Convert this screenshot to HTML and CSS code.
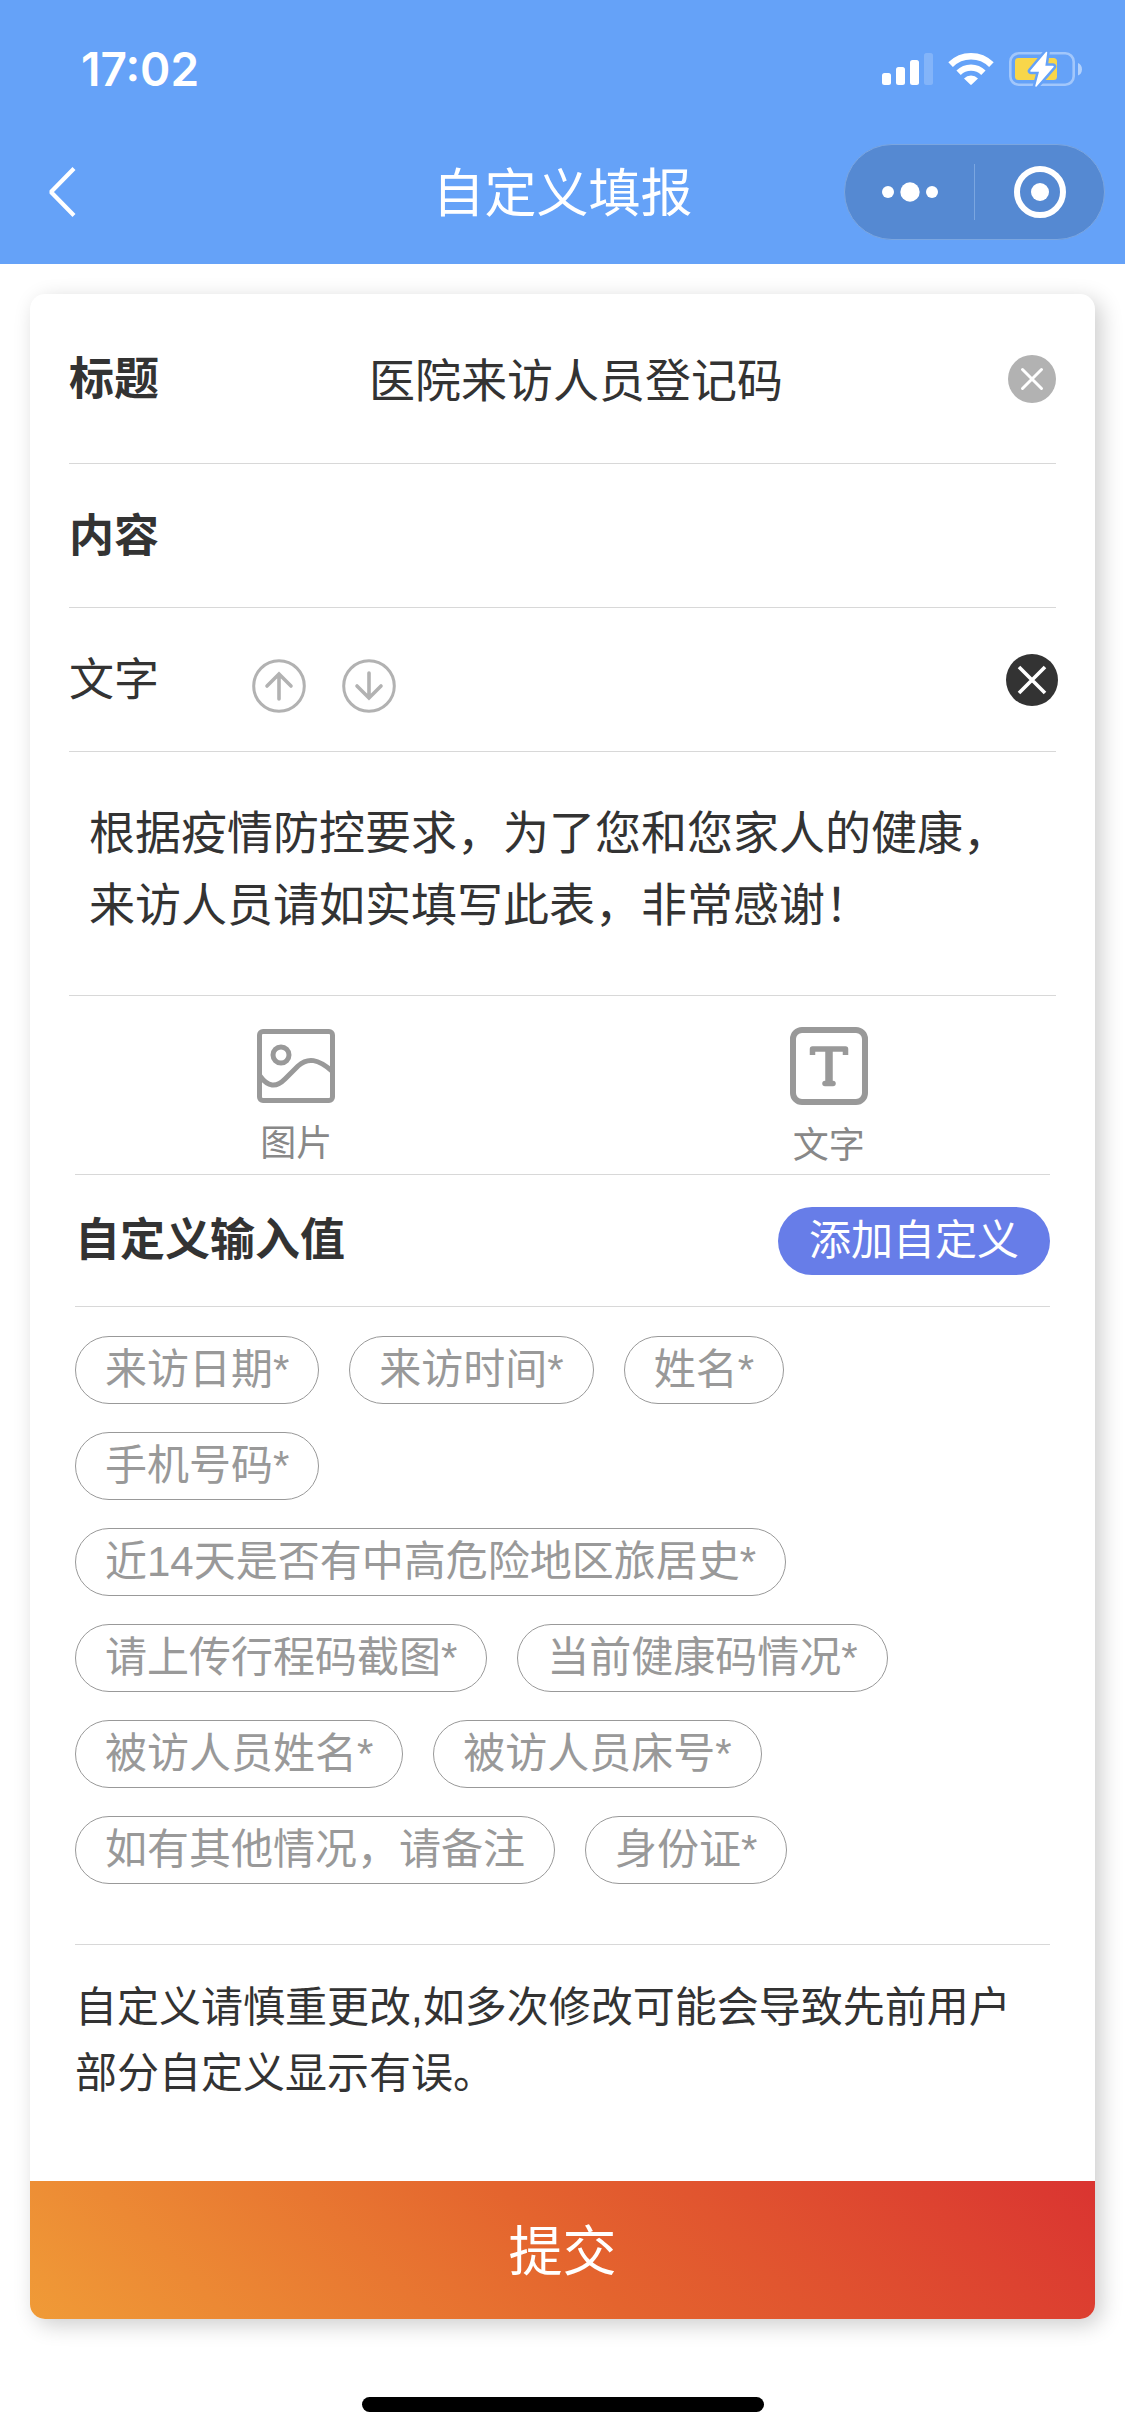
FILE: index.html
```html
<!DOCTYPE html>
<html lang="zh-CN">
<head>
<meta charset="utf-8">
<meta name="viewport" content="width=device-width, initial-scale=1">
<title>自定义填报</title>
<link rel="stylesheet" href="styles.css">
</head>
<body>
<header class="header">
  <div class="status">
    <span class="time">17:02</span>
    <div class="status-icons">
      <svg width="51" height="34" viewBox="0 0 51 34" fill="#fff" aria-hidden="true">
        <rect x="0" y="21" width="9" height="12" rx="2.5"/>
        <rect x="14" y="15" width="9" height="18" rx="2.5"/>
        <rect x="28" y="8" width="9" height="25" rx="2.5"/>
        <rect x="42" y="1" width="9" height="32" rx="2.5" opacity=".2"/>
      </svg>
      <svg width="46" height="34" viewBox="0 0 46 34" aria-hidden="true">
        <path d="M2.6 12.6a29 29 0 0 1 40.8 0" fill="none" stroke="#fff" stroke-width="6.5"/>
        <path d="M10.6 20.7a17.6 17.6 0 0 1 24.8 0" fill="none" stroke="#fff" stroke-width="6.2"/>
        <path d="M16 26.4a10 10 0 0 1 14 0l-6.3 6.2q-.7.7-1.4 0z" fill="#fff"/>
      </svg>
      <svg width="73" height="36" viewBox="0 0 73 36" aria-hidden="true">
        <rect x="1.3" y="2.3" width="63.4" height="31.4" rx="8.5" fill="none" stroke="#fff" stroke-opacity=".4" stroke-width="2.6"/>
        <path d="M69 12c5.3 1.5 5.3 11 0 12.5z" fill="#fff" opacity=".5"/>
        <rect x="6" y="7" width="42" height="22" rx="3.5" fill="#f8d64a"/>
        <path d="M37.5 1.5 22 20h9l-4 15L44 15.500h-8.500z" fill="#fff" stroke="#65a2f8" stroke-width="6.5" stroke-linejoin="round"/>
        <path d="M37.5 1.5 22 20h9l-4 15L44 15.500h-8.500z" fill="#fff" stroke="#fff" stroke-width="1.5" stroke-linejoin="round"/>
      </svg>
    </div>
  </div>
  <nav class="nav">
    <button class="back" type="button" aria-label="返回">
      <svg width="29" height="50" viewBox="0 0 29 50" fill="none" stroke="#fff" stroke-width="4.2" stroke-linejoin="bevel"><path d="M26 1.5 3 25l23 23.5"/></svg>
    </button>
    <h1 class="title">自定义填报</h1>
    <div class="capsule">
      <button class="capsule-btn" type="button" aria-label="更多">
        <svg width="56" height="20" viewBox="0 0 56 20" fill="#fff"><circle cx="6" cy="10" r="6"/><circle cx="28" cy="10" r="9.7"/><circle cx="50" cy="10" r="6"/></svg>
      </button>
      <button class="capsule-btn" type="button" aria-label="关闭">
        <svg width="52" height="52" viewBox="0 0 52 52"><circle cx="26" cy="26" r="23" fill="none" stroke="#fff" stroke-width="6"/><circle cx="26" cy="26" r="9" fill="#fff"/></svg>
      </button>
    </div>
  </nav>
</header>

<main class="page">
  <form class="card">
    <div class="fields">
      <div class="row row-title">
        <label class="label strong" for="form-title">标题</label>
        <input class="title-input" id="form-title" type="text" value="医院来访人员登记码">
        <button class="round-btn" type="button" aria-label="清空标题">
          <svg width="48" height="48" viewBox="0 0 48 48"><circle cx="24" cy="24" r="24" fill="#b2b2b2"/><path d="m14.500 14.500 19 19m0-19-19 19" stroke="#fff" stroke-width="3" stroke-linecap="round"/></svg>
        </button>
      </div>
      <div class="row">
        <h2 class="label strong">内容</h2>
      </div>
      <div class="row">
        <label class="label" for="form-text">文字</label>
        <div class="movers">
          <button class="move-btn" type="button" aria-label="上移">
            <svg width="54" height="54" viewBox="0 0 54 54" fill="none" stroke="#b2b2b2" stroke-width="3"><circle cx="27" cy="27" r="25.3"/><path d="M27 40V15M15 27l12-12 12 12" stroke-width="3.6" stroke-linecap="round"/></svg>
          </button>
          <button class="move-btn" type="button" aria-label="下移">
            <svg width="54" height="54" viewBox="0 0 54 54" fill="none" stroke="#b2b2b2" stroke-width="3"><circle cx="27" cy="27" r="25.3"/><path d="M27 14v25M15 27l12 12 12-12" stroke-width="3.6" stroke-linecap="round"/></svg>
          </button>
        </div>
        <button class="round-btn" type="button" aria-label="删除文字">
          <svg width="52" height="52" viewBox="0 0 52 52"><circle cx="26" cy="26" r="26" fill="#333"/><path d="m13 13 26 26m0-26L13 39" stroke="#fff" stroke-width="3.6"/></svg>
        </button>
      </div>
      <div class="text-block">
        <textarea class="text-area" id="form-text" rows="2">根据疫情防控要求，为了您和您家人的健康，来访人员请如实填写此表，非常感谢！</textarea>
      </div>
    </div>

    <div class="tools">
      <button class="tool" type="button">
        <svg width="78" height="74" viewBox="0 0 78 74" fill="none" stroke="#999" stroke-width="5"><rect x="2.5" y="2.5" width="73" height="69" rx="3.5"/><circle cx="24" cy="26" r="8"/><path d="M3 47c8 11 16 12 25 3l13-13c10-9 20-7 34 5"/></svg>
        <span>图片</span>
      </button>
      <button class="tool" type="button">
        <svg width="78" height="78" viewBox="0 0 78 78" fill="none" stroke="#999"><rect x="3" y="3" width="72" height="72" rx="9" stroke-width="6"/><path d="M22.500 28v-6h33v6" stroke-width="5.5" stroke-linejoin="round"/><path d="M39 22v34" stroke-width="7.5"/><path d="M35 56.500h8" stroke-width="5.5" stroke-linecap="round"/></svg>
        <span>文字</span>
      </button>
    </div>

    <section class="custom">
      <div class="custom-head">
        <h2 class="label strong">自定义输入值</h2>
        <button class="add-btn" type="button">添加自定义</button>
      </div>
      <div class="chips">
        <button class="chip" type="button">来访日期*</button>
        <button class="chip" type="button">来访时间*</button>
        <button class="chip" type="button">姓名*</button>
        <button class="chip" type="button">手机号码*</button>
        <button class="chip" type="button">近14天是否有中高危险地区旅居史*</button>
        <button class="chip" type="button">请上传行程码截图*</button>
        <button class="chip" type="button">当前健康码情况*</button>
        <button class="chip" type="button">被访人员姓名*</button>
        <button class="chip" type="button">被访人员床号*</button>
        <button class="chip" type="button">如有其他情况，请备注</button>
        <button class="chip" type="button">身份证*</button>
      </div>
      <p class="note">自定义请慎重更改,如多次修改可能会导致先前用户部分自定义显示有误。</p>
    </section>

    <button class="submit" type="submit">提交</button>
  </form>
</main>
<footer class="home"><div class="home-bar"></div></footer>
</body>
</html>
```

FILE: styles.css
```css
*, *::before, *::after { box-sizing: border-box; }

body {
  margin: 0;
  background: #fff;
  color: #333;
  font-family: "Liberation Sans", "Noto Sans CJK SC", sans-serif;
  font-size: 45px;
  line-height: 66px;
}

button, input, textarea {
  margin: 0;
  padding: 0;
  border: 0;
  background: none;
  color: inherit;
  font: inherit;
}

h1, h2, p { margin: 0; }
svg { display: block; flex: none; }

.header { background: #65a2f8; color: #fff; }

.status {
  display: flex;
  align-items: center;
  justify-content: space-between;
  height: 120px;
  padding: 18px 43px 0 81px;
}
.time { font-family: Inter, sans-serif; font-size: 46px; font-weight: 600; }
.status-icons { display: flex; align-items: center; gap: 15px; }

.nav {
  display: grid;
  grid-template-columns: 1fr auto 1fr;
  align-items: center;
  height: 144px;
  padding: 0 20px;
}
.back { justify-self: start; padding-left: 28px; }
.title { padding-top: 4px; font-size: 52px; font-weight: 400; }
.capsule {
  justify-self: end;
  display: flex;
  width: 261px;
  height: 96px;
  padding: 19px 0;
  border: 1px solid #7ba6e0;
  border-radius: 48px;
  background: #5589d2;
}
.capsule-btn { flex: 1; display: grid; place-items: center; }
.capsule-btn + .capsule-btn { border-left: 1px solid #7ba6e0; }

.page { padding: 30px 30px 78px; }

.card {
  overflow: hidden;
  border-radius: 15px;
  background: #fff;
  box-shadow: 6px 6px 22px rgba(0, 0, 0, .2);
}

.fields { margin: 0 39px; }
.row {
  display: flex;
  align-items: center;
  height: 144px;
  border-bottom: 1px solid #d8d8d8;
}
.row-title { height: 170px; }
.label { padding-top: 2px; font-size: 45px; font-weight: 400; }
.strong { font-weight: 700; }
.row-title .label { flex: 0 0 300px; }
.title-input { flex: 1; min-width: 0; height: 72px; padding-bottom: 4px; font-size: 46px; }
.round-btn {
  display: grid;
  place-items: center;
  place-content: center;
  width: 48px;
  height: 52px;
  margin-left: auto;
}
.movers { display: flex; gap: 36px; margin-left: 93px; padding-top: 12px; }

.text-block { padding: 45px 20px 54px; border-bottom: 1px solid #d8d8d8; }
.text-area {
  display: block;
  width: 100%;
  height: 144px;
  font-size: 46px;
  line-height: 72px;
  resize: none;
  overflow: hidden;
}

.tools {
  display: grid;
  grid-template-columns: 1fr 1fr;
  align-items: center;
  padding: 31px 0 3px;
  color: #888;
  font-size: 36px;
  line-height: 50px;
}
.tool { display: flex; flex-direction: column; align-items: center; gap: 16px; }

.custom { margin: 0 45px; border-top: 1px solid #d8d8d8; }
.custom-head {
  display: flex;
  align-items: center;
  justify-content: space-between;
  height: 132px;
  border-bottom: 1px solid #d8d8d8;
}
.custom-head .label { padding-top: 0; }
.add-btn {
  padding: 1px 31px;
  border-radius: 34px;
  background: #677de8;
  color: #fff;
  font-size: 42px;
}
.chips {
  display: flex;
  flex-wrap: wrap;
  gap: 28px 30px;
  padding: 29px 0 60px;
  border-bottom: 1px solid #d8d8d8;
}
.chip {
  padding: 0 29px;
  border: 1px solid #999;
  border-radius: 34px;
  color: #999;
  font-size: 42px;
}
.note { padding: 30px 0 74px; font-size: 42px; }

.submit {
  display: block;
  width: 100%;
  height: 138px;
  padding-top: 4px;
  background: linear-gradient(45deg, #f09b37, #e4642e 50%, #da3431);
  color: #fff;
  font-size: 54px;
}

.home { padding-bottom: 24px; }
.home-bar { width: 402px; height: 15px; margin: 0 auto; border-radius: 8px; background: #000; }
```
